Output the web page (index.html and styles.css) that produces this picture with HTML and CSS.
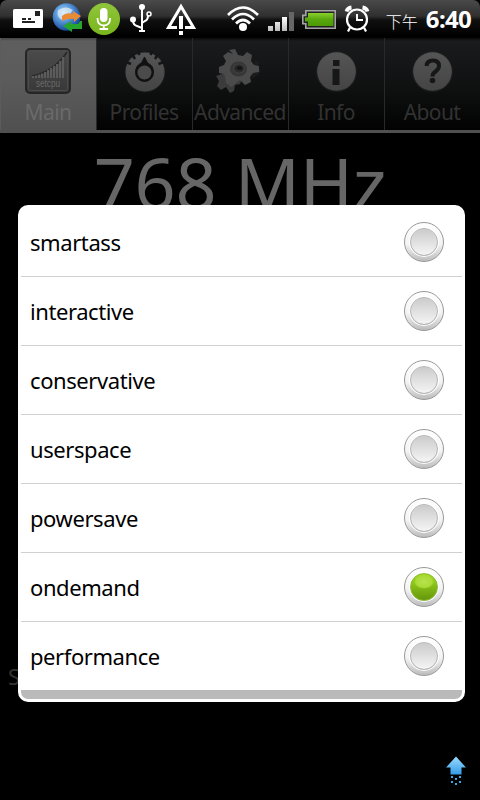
FILE: index.html
```html
<!DOCTYPE html>
<html lang="en">
<head>
  <meta charset="UTF-8">
  <title>SetCPU</title>
  <meta name="viewport" content="width=device-width, initial-scale=1.0">
  <link rel="stylesheet" href="styles.css">
</head>
<body>

  <header class="status-bar">
    <svg class="status-icons" width="210" height="38" viewBox="0 0 210 38">
      <defs>
        <radialGradient id="globe" cx=".4" cy=".35" r=".65">
          <stop offset="0" stop-color="#c5e2f7"/>
          <stop offset=".45" stop-color="#5c9bdc"/>
          <stop offset="1" stop-color="#14489c"/>
        </radialGradient>
        <linearGradient id="mic" x2="0" y2="1">
          <stop offset="0" stop-color="#8fc63a"/>
          <stop offset="1" stop-color="#79b51c"/>
        </linearGradient>
      </defs>
      <!-- message card -->
      <rect x="13" y="9" width="30" height="19" rx="1.500" fill="#fff"/>
      <path d="M35 11h5v5h-5zM22 18h4v2h-4zM28 18h3v2h-3zM22 21h13v2H22z" fill="#222"/>
      <!-- globe with sync arrows -->
      <circle cx="66.500" cy="17" r="13.800" fill="url(#globe)"/>
      <path d="M58 10q8-5 15 0l-4 5-7 5q-6-3-4-10z" fill="#e4f1fa" opacity=".7"/>
      <path d="M62 16q4-4 11-2v-3l8 5-7 6v-3q-6-1-12 2z" fill="#e98a35"/>
      <path d="M82 21v8H72v3l-9-6 8-5v3h7l2-3z" fill="#27a52c"/>
      <!-- microphone -->
      <circle cx="104" cy="19" r="16" fill="url(#mic)"/>
      <rect x="100" y="8" width="7.500" height="14" rx="3.700" fill="#fff"/>
      <path d="M97.500 18q0 7.500 6.300 7.500t6.300-7.500M103.800 25v4M99.500 29h8.600" fill="none" stroke="#fff" stroke-width="1.800"/>
      <!-- usb -->
      <g fill="none" stroke="#fff" stroke-width="2">
        <path d="M142 7v24M133 20q0 5 4 6l5 2M148 15q0 5-3 6l-3 2M139 31h6"/>
        <circle cx="149" cy="14" r="2" stroke-width="1.500"/>
      </g>
      <circle cx="142" cy="7" r="3" fill="#fff"/>
      <circle cx="133" cy="19.500" r="3" fill="#fff"/>
      <!-- warning -->
      <path d="M177 27.500h-8.500L181 6.500l12.500 21H185" fill="none" stroke="#fff" stroke-width="3"/>
      <path d="M179 16h4v13h-4zM179 31h4v4h-4z" fill="#fff"/>
    </svg>

    <svg class="status-icons" width="150" height="38" viewBox="225 0 150 38">
      <defs>
        <linearGradient id="bars" x2="0" y2="1">
          <stop offset="0" stop-color="#fff"/>
          <stop offset="1" stop-color="#bbb"/>
        </linearGradient>
        <linearGradient id="battery" x2="0" y2="1">
          <stop offset="0" stop-color="#8bd02d"/>
          <stop offset=".5" stop-color="#57a70d"/>
          <stop offset="1" stop-color="#4c9a05"/>
        </linearGradient>
      </defs>
      <!-- wifi -->
      <g fill="none" stroke="#fff" stroke-width="2.700">
        <path d="M228 15q15-15 30 0M232 19.500q11-11 22 0M236 23.500q7-7 14 0"/>
      </g>
      <circle cx="243" cy="27" r="4" fill="#fff"/>
      <!-- signal -->
      <path d="M268 26h5v5h-5zM275 22h5v9h-5zM282 17h5v14h-5z" fill="url(#bars)"/>
      <path d="M289 12h5v19h-5z" fill="#666"/>
      <!-- battery -->
      <path d="M305.800 10.800h29.400v17.400h-29.400v-4.400h-3v-8.400h3z" fill="#222" stroke="#a5a5a5" stroke-width="1.600"/>
      <path d="M308 13h25.500v13H308v-4.500h-3v-4h3z" fill="url(#battery)"/>
      <!-- alarm -->
      <g fill="none" stroke="#fff">
        <circle cx="357" cy="19.500" r="10" stroke-width="2.200"/>
        <path d="M357 14v6h6" stroke-width="1.900"/>
        <path d="M350 27.500l-2 4M364 27.500l2 4" stroke-width="2.200"/>
        <path d="M346.500 11.500q1-3.500 5-4M362.500 7.500q4 .5 5 4" stroke-width="3.800"/>
      </g>
    </svg>

    <div class="clock"><span class="ampm">下午</span><span class="time">6:40</span></div>
  </header>

  <nav class="tabs">
    <div class="tab active">
      <svg width="48" height="50" viewBox="24 46 48 50">
        <defs>
          <linearGradient id="chip" x2="0" y2="1">
            <stop offset="0" stop-color="#4b4b4b"/>
            <stop offset="1" stop-color="#383838"/>
          </linearGradient>
        </defs>
        <rect x="26" y="49" width="44" height="44" rx="4" fill="url(#chip)" stroke="#262626" stroke-width="2"/>
        <rect x="28.500" y="51.500" width="39" height="39" rx="2" fill="none" stroke="#4c4c4c"/>
        <path d="M32 76Q54 72 67 52" fill="none" stroke="#282828" stroke-width="1.500"/>
        <path d="M33 78v-2M36 78v-2.500M39 78v-3.500M42 78v-4.500M45 78v-6M48 78v-8M51 78v-10M54 78v-12M57 78v-14M60 78v-17M63 78v-21" stroke="#5f5f5f" stroke-width="1.800"/>
        <text class="chip-name" x="36" y="87" textLength="24" lengthAdjust="spacingAndGlyphs">setcpu</text>
      </svg>
      <span>Main</span>
    </div>
    <div class="tab">
      <svg width="48" height="50" viewBox="120 46 48 50">
        <defs>
          <linearGradient id="disc" x2="0" y2="1">
            <stop offset="0" stop-color="#555"/>
            <stop offset="1" stop-color="#444"/>
          </linearGradient>
        </defs>
        <circle cx="145" cy="72" r="20.500" fill="#222" opacity=".6"/>
        <circle cx="145" cy="72" r="19.500" fill="url(#disc)"/>
        <path d="M126 62l5 2M132 54l3 5M138 51l1.500 4M158 54l-3 5M163.500 62l-5 2M152 51l-1.500 4" stroke="#141516" stroke-width="2.500"/>
        <path d="M144.500 57l-3 6q-6 2.500-6 9.500a9 9 0 0 0 18 0q0-7-6-9.500z" fill="#101112" stroke="#101112"/>
        <circle cx="144.500" cy="72.500" r="7" fill="#4b4b4b"/>
      </svg>
      <span>Profiles</span>
    </div>
    <div class="tab">
      <svg width="48" height="50" viewBox="216 46 48 50">
        <path d="M255 60l5 2-3 5 4 3-3 5-7 4z" fill="#1c1c1c"/>
        <path d="M216 76l6-2 3-5 18 8-3 7-5 1-1 6-4 2-4-6-5 3-4-4 2-5z" fill="#3b3b3b"/>
        <path d="M229 50l6-1 3 6 5 1 4-4 5 3-1 6 3 4 5 1v6l-6 1-3 4 1 5-6 3-5-5-4 3-5 4-5-4-1-6-1-3-5-1v-6l5-2 2-4-3-5 5-4 5 2z" fill="#4b4b4b"/>
        <ellipse cx="238.500" cy="69" rx="8.500" ry="7.500" fill="#363636"/>
        <ellipse cx="239" cy="68.500" rx="5.500" ry="4.500" fill="#2a2a2a" stroke="#404040" stroke-width="1.200"/>
        <ellipse cx="239.500" cy="68" rx="3" ry="1.800" fill="#151515"/>
      </svg>
      <span>Advanced</span>
    </div>
    <div class="tab">
      <svg width="48" height="50" viewBox="312 46 48 50">
        <circle cx="336.500" cy="71.500" r="20.500" fill="#222" opacity=".7"/>
        <circle cx="336.500" cy="71.500" r="19.300" fill="url(#disc)"/>
        <path d="M333 60h6.500v6H333zM332.500 69h7v16h-7z" fill="#161717"/>
      </svg>
      <span>Info</span>
    </div>
    <div class="tab">
      <svg width="48" height="50" viewBox="408 46 48 50">
        <circle cx="432.500" cy="71.500" r="20.500" fill="#222" opacity=".7"/>
        <circle cx="432.500" cy="71.500" r="19.300" fill="url(#disc)"/>
        <path d="M426.500 66q.5-5.500 6.500-5.500 6 0 6 5.500 0 3-3.500 5.500-3 2-3 5" fill="none" stroke="#161717" stroke-width="4"/>
        <circle cx="432.500" cy="80.500" r="2.800" fill="#161717"/>
      </svg>
      <span>About</span>
    </div>
  </nav>

  <main>
    <div class="frequency">768 MHz</div>
    <div class="boot-label">S</div>
    <svg class="upload-arrow" width="24" height="34" viewBox="444 754 24 34">
      <defs>
        <linearGradient id="arrow" x2="0" y2="1">
          <stop offset="0" stop-color="#9bdcff"/>
          <stop offset="1" stop-color="#359be6"/>
        </linearGradient>
      </defs>
      <path d="M456 756.500l10 11h-4.500v7h-11v-7H446z" fill="url(#arrow)"/>
      <path d="M451 776h2v2h-2zM459 776h2v2h-2zM455 778h2v2h-2zM451 781h2v2h-2zM459 781h2v2h-2zM455 783h2v2h-2z" fill="#35a8df"/>
    </svg>
  </main>

  <!-- governor picker -->
  <div class="dialog">
    <ul class="options">
      <li class="option">smartass<span class="radio"></span></li>
      <li class="option">interactive<span class="radio"></span></li>
      <li class="option">conservative<span class="radio"></span></li>
      <li class="option">userspace<span class="radio"></span></li>
      <li class="option">powersave<span class="radio"></span></li>
      <li class="option">ondemand<span class="radio checked"></span></li>
      <li class="option">performance<span class="radio"></span></li>
    </ul>
    <div class="dialog-footer"></div>
  </div>

</body>
</html>
```
FILE: styles.css
```css
* {
  box-sizing: border-box;
}

body {
  margin: 0;
  width: 480px;
  height: 800px;
  overflow: hidden;
  position: relative;
  display: flex;
  flex-direction: column;
  background: #000;
  font-family: "Noto Sans", "Noto Sans CJK TC", sans-serif;
}

.status-bar {
  height: 38px;
  display: flex;
  align-items: center;
  background: linear-gradient(#4a4a4a 0, #303030 16px, #101010 20px, #000 36px);
  border-radius: 7px 7px 0 0;
}

.status-icons {
  display: block;
  flex: none;
}

.status-icons + .status-icons {
  margin-left: 15px;
}

.clock {
  flex: 1;
  display: flex;
  align-items: baseline;
  justify-content: flex-end;
  padding-top: 2px;
  padding-right: 9px;
  color: #fff;
  line-height: 38px;
}

.ampm {
  font-family: "Noto Sans CJK TC", sans-serif;
  font-size: 16px;
  font-weight: 300;
  margin-right: 8px;
}

.time {
  font-size: 24px;
  font-weight: 700;
  letter-spacing: -0.7px;
}

.tabs {
  height: 95px;
  display: flex;
  border-bottom: 3px solid #505050;
}

.tab {
  width: 96px;
  display: flex;
  flex-direction: column;
  align-items: center;
  padding-top: 8px;
  padding-right: 1px;
  border-left: 1px solid #292929;
  background: linear-gradient(#0a0a0a 0, #1a1b1d 3px, #0f1010 50px, #020202 92px);
  color: #323232;
  font-size: 21px;
  line-height: 30px;
  letter-spacing: -0.6px;
}

.tab span {
  margin-top: 1px;
}

.tab svg {
  display: block;
}

.tab.active {
  border-left-color: #5c5c5c;
  background: linear-gradient(#444 0, #5e5e5e 3px, #5c5c5c 40px, #505050 92px);
  color: #6a6a6a;
}

.chip-name {
  font-family: "Liberation Sans", sans-serif;
  font-size: 10px;
  letter-spacing: 0;
  fill: #6a6a6a;
}

main {
  flex: 1;
  display: flex;
  flex-direction: column;
}

.frequency {
  height: 528px;
  color: #666;
  font-size: 72px;
  line-height: 98px;
  letter-spacing: -0.3px;
  text-align: center;
}

.boot-label {
  padding-left: 8px;
  color: #333;
  font-size: 22px;
  line-height: 30px;
  letter-spacing: -0.4px;
}

.upload-arrow {
  margin: auto 12px 12px auto;
}

.dialog {
  position: absolute;
  left: 18px;
  top: 205px;
  width: 447px;
  height: 497px;
  padding: 3px;
  background: #fff;
  border-radius: 10px;
}

.options {
  list-style: none;
  margin: 0;
  padding: 0;
}

.option {
  height: 69px;
  display: flex;
  align-items: center;
  justify-content: space-between;
  padding: 0 18px 0 9px;
  border-bottom: 1px solid #d0d0d0;
  color: #000;
  font-size: 22px;
  letter-spacing: -0.42px;
}

.option:last-child {
  border-bottom-color: #bababa;
}

.radio {
  width: 40px;
  height: 40px;
  margin-bottom: 1px;
  display: grid;
  place-items: center;
  border: 1px solid #999;
  border-radius: 50%;
  background: linear-gradient(#fff 0, #f4f4f4 55%, #bdbdbd 100%);
}

.radio::before {
  content: "";
  width: 26px;
  height: 26px;
  border: 1px solid #b4b4b4;
  border-radius: 50%;
  background: linear-gradient(#cbcbcb, #f5f5f5);
  background-clip: padding-box;
  box-shadow: 0 0 0 1px #fff;
}

.radio.checked::before {
  border-color: #8dbb35;
  background:
    radial-gradient(ellipse 10px 7px at 50% 30%, #b6e34c 0, #abdb38 80%, transparent 100%),
    linear-gradient(#a4dd22, #65970c);
}

.dialog-footer {
  height: 8px;
  background: #bababa;
  border-radius: 0 0 7px 7px;
}
```
